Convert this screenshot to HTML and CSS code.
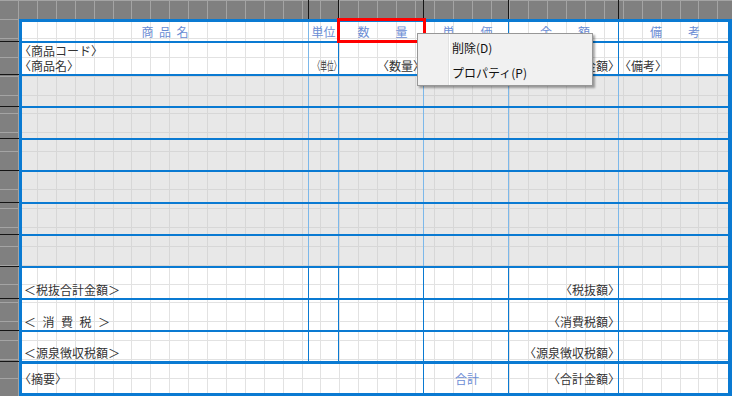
FILE: index.html
```html
<!DOCTYPE html>
<html lang="ja">
<head>
    <meta charset="UTF-8">
    <title>明細レイアウト</title>
    <link rel="stylesheet" href="styles.css">
</head>
<body>
    <div class="sheet">
        <div class="corner paper dark"></div>

        <!-- column ruler -->
        <div class="ruler-top paper dark">
            <span class="seg w-name"></span>
            <span class="seg w-unit"></span>
            <span class="seg w-qty"></span>
            <span class="seg w-price"></span>
            <span class="seg w-amount"></span>
            <span class="seg w-note"></span>
        </div>

        <!-- row ruler -->
        <div class="ruler-left paper dark">
            <span class="tick h-head"></span>
            <span class="tick h-labels"></span>
            <span class="tick"></span>
            <span class="tick"></span>
            <span class="tick"></span>
            <span class="tick"></span>
            <span class="tick"></span>
            <span class="tick"></span>
            <span class="tick"></span>
            <span class="tick"></span>
            <span class="tick h-last"></span>
            <span class="tick h-rest"></span>
        </div>

        <div class="form">
            <div class="row head paper">
                <div class="cell name"><span class="spaced">商品名</span></div>
                <div class="cell soft">単位</div>
                <div class="cell pair"><span>数</span><span>量</span></div>
                <div class="cell pair"><span>単</span><span>価</span></div>
                <div class="cell pair"><span>金</span><span>額</span></div>
                <div class="cell pair"><span>備</span><span>考</span></div>
            </div>

            <div class="row labels paper">
                <div class="cell">
                    <div class="line tag">〈商品コード〉</div>
                    <div class="line tag">〈商品名〉</div>
                </div>
                <div class="cell soft">
                    <div class="line"></div>
                    <div class="line squeeze"><span class="tag">〈単位〉</span></div>
                </div>
                <div class="cell">
                    <div class="line"></div>
                    <div class="line tag right">〈数量〉</div>
                </div>
                <div class="cell">
                    <div class="line"></div>
                    <div class="line"></div>
                </div>
                <div class="cell">
                    <div class="line"></div>
                    <div class="line tag right">〈金額〉</div>
                </div>
                <div class="cell">
                    <div class="line"></div>
                    <div class="line tag note">〈備考〉</div>
                </div>
            </div>

            <div class="row band paper gray"><div class="cell"></div><div class="cell"></div><div class="cell"></div><div class="cell"></div><div class="cell"></div><div class="cell"></div></div>
            <div class="row band paper gray"><div class="cell"></div><div class="cell"></div><div class="cell"></div><div class="cell"></div><div class="cell"></div><div class="cell"></div></div>
            <div class="row band paper gray"><div class="cell"></div><div class="cell"></div><div class="cell"></div><div class="cell"></div><div class="cell"></div><div class="cell"></div></div>
            <div class="row band paper gray"><div class="cell"></div><div class="cell"></div><div class="cell"></div><div class="cell"></div><div class="cell"></div><div class="cell"></div></div>
            <div class="row band paper gray"><div class="cell"></div><div class="cell"></div><div class="cell"></div><div class="cell"></div><div class="cell"></div><div class="cell"></div></div>
            <div class="row band paper gray"><div class="cell"></div><div class="cell"></div><div class="cell"></div><div class="cell"></div><div class="cell"></div><div class="cell"></div></div>

            <div class="row sum paper">
                <div class="cell title">＜税抜合計金額＞</div>
                <div class="cell"></div>
                <div class="cell"></div>
                <div class="cell"></div>
                <div class="cell tag right">〈税抜額〉</div>
                <div class="cell"></div>
            </div>
            <div class="row sum paper">
                <div class="cell title wide">＜消費税＞</div>
                <div class="cell"></div>
                <div class="cell"></div>
                <div class="cell"></div>
                <div class="cell tag right">〈消費税額〉</div>
                <div class="cell"></div>
            </div>
            <div class="row sum last paper">
                <div class="cell title">＜源泉徴収税額＞</div>
                <div class="cell"></div>
                <div class="cell"></div>
                <div class="cell"></div>
                <div class="cell tag right">〈源泉徴収税額〉</div>
                <div class="cell"></div>
            </div>

            <div class="row foot paper">
                <div class="cell tag">〈摘要〉</div>
                <div class="cell caption">合計</div>
                <div class="cell tag right">〈合計金額〉</div>
                <div class="cell"></div>
            </div>
        </div>

        <div class="marker"></div>

        <div class="menu">
            <div class="menu-item">削除(D)</div>
            <div class="menu-item">プロパティ(P)</div>
        </div>
    </div>
</body>
</html>
```

FILE: styles.css
```css
body {
    margin: 0;
    font-family: "Noto Sans CJK JP", sans-serif;
    font-size: 12px;
    background-color: #808080;
}

.sheet {
    position: relative;
    display: grid;
    grid-template-columns: 19px 713px;
    grid-template-rows: 19px 377px;
    width: 732px;
    height: 396px;
    overflow: hidden;
}

/* 5mm layout grid, shared by every area */
.paper {
    --base: #ffffff;
    --line: #e2e2e2;
    background-color: var(--base);
    background-image:
        repeating-linear-gradient(90deg, var(--line) 0 0.1px, transparent 0.1px 18px, var(--line) 18px 18.9px),
        repeating-linear-gradient(180deg, var(--line) 0 1px, transparent 1px 18.9px);
    background-attachment: fixed;
}

.paper.dark {
    --base: #808080;
    --line: #a4a4a4;
}

.paper.gray {
    --base: #e8e8e8;
    --line: #d7d7d7;
}

/* rulers */
.ruler-top {
    display: flex;
}

.ruler-top .seg {
    box-sizing: border-box;
    border-left: 1px solid #151515;
}

.ruler-top .w-name { width: 289px; border-left: none; }
.ruler-top .w-unit { width: 30px; }
.ruler-top .w-qty { width: 85px; }
.ruler-top .w-price { width: 85px; }
.ruler-top .w-amount { width: 110px; }
.ruler-top .w-note { flex: 1; }

.ruler-left {
    display: flex;
    flex-direction: column;
}

.ruler-left .tick {
    box-sizing: border-box;
    height: 32px;
    border-bottom: 1px solid #151515;
}

.ruler-left .h-head { height: 23px; }
.ruler-left .h-labels { height: 33px; }
.ruler-left .h-last { height: 31px; }
.ruler-left .h-rest { flex: 1; border-bottom: none; }

/* form */
.form {
    display: flex;
    flex-direction: column;
    border: 3px solid #0a7ad2;
    border-right-width: 4px;
}

.row {
    display: grid;
    grid-template-columns: 286px 30px 85px 85px 110px 110px;
    box-sizing: border-box;
    border-bottom: 2px solid #0a7ad2;
    color: #333333;
}

.cell {
    box-sizing: border-box;
    border-left: 1px solid #0a7ad2;
    min-width: 0;
    white-space: nowrap;
}

.cell:first-child {
    border-left: none;
}

.cell.soft,
.band .cell {
    border-left-color: #7cb8ea;
}

.tag {
    font-feature-settings: "halt";
}

.right {
    text-align: right;
    padding-right: 4px;
}

.head {
    height: 21px;
}

.head .cell {
    display: flex;
    align-items: center;
    justify-content: center;
    color: #6b8dd4;
    line-height: 19px;
}

.head .spaced {
    letter-spacing: 5.5px;
    padding-left: 5.5px;
}

.head .pair {
    gap: 26px;
    padding-left: 3px;
}

.labels {
    height: 33px;
}

.labels .line {
    height: 15px;
    line-height: 15px;
}

.labels .line + .line {
    height: 16px;
    line-height: 16px;
}

.labels .cell:first-child .line {
    padding-left: 3px;
}

.labels .note {
    padding-left: 6px;
}

.squeeze {
    text-align: center;
}

.squeeze .tag {
    display: inline-block;
    transform: scaleX(0.56);
}

.band {
    height: 32px;
}

.sum {
    height: 32px;
}

.sum .cell {
    display: flex;
    align-items: flex-end;
    line-height: 14px;
    padding-bottom: 1px;
}

.sum .right {
    justify-content: flex-end;
}

.sum .title {
    padding-left: 2px;
}

.sum .wide {
    letter-spacing: 6.5px;
}

.sum.last {
    border-bottom-width: 3px;
}

.foot {
    height: 29px;
    border-bottom: none;
    grid-template-columns: 401px 85px 110px 110px;
}

.foot .cell {
    display: flex;
    align-items: center;
}

.foot .cell:first-child {
    padding-left: 3px;
}

.foot .right {
    justify-content: flex-end;
}

.foot .caption {
    justify-content: center;
    color: #6b8dd4;
    padding-left: 2px;
}

/* selection frame and context menu */
.marker {
    position: absolute;
    left: 337px;
    top: 18px;
    width: 89px;
    height: 25px;
    box-sizing: border-box;
    border: 3px solid #ff0000;
}

.menu {
    position: absolute;
    left: 417px;
    top: 33px;
    width: 176px;
    height: 53px;
    box-sizing: border-box;
    padding: 1px;
    border: 1px solid #979797;
    background: linear-gradient(90deg, transparent 30px, #e2e3e3 30px 31px, #ffffff 31px 32px, transparent 32px), #f1f1f1;
    box-shadow: 2px 2px 2px rgba(0, 0, 0, 0.35);
    color: #111111;
}

.menu-item {
    height: 25px;
    line-height: 25px;
    padding-left: 33px;
}
```
